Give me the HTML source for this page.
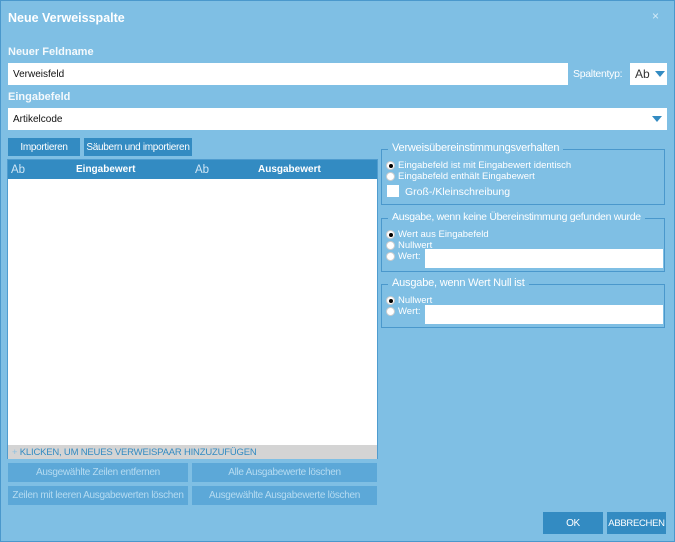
<!DOCTYPE html>
<html><head><style>
*{margin:0;padding:0;box-sizing:border-box}
body{width:675px;height:542px;background:#7fbfe4;font-family:"Liberation Sans",sans-serif;color:#fff;position:relative;overflow:hidden}
.a{position:absolute}
.inp{position:absolute;background:#fff;color:#111;font-size:10px;padding-left:5px;display:flex;align-items:center}
.btn{position:absolute;background:#338bc2;color:#fff;font-size:10px;display:flex;align-items:center;justify-content:center;letter-spacing:-0.3px}
.dis{position:absolute;background:#5ca8d8;color:#b5dbf1;font-size:10px;display:flex;align-items:center;justify-content:center;letter-spacing:-0.3px}
.grp{position:absolute;border:1px solid #4a98cc}
.lg{position:absolute;top:-8px;left:6px;background:#7fbfe4;padding:0 4px;font-size:11px;white-space:nowrap;letter-spacing:-0.2px}
.r{position:absolute;font-size:9.5px;display:flex;align-items:center;white-space:nowrap}
.rb{width:9px;height:9px;border-radius:50%;background:#fff;margin-right:3px;border:1px solid #ccc;position:relative}
.rb.on::after{content:"";position:absolute;left:1.5px;top:1.5px;width:4px;height:4px;border-radius:50%;background:#000}
.tri{width:0;height:0;border-left:5px solid transparent;border-right:5px solid transparent;border-top:6px solid #338bc2;position:absolute}
</style></head><body>
<div class="a" style="left:0;top:0;width:675px;height:542px;border:1px solid #4a98cc"></div>
<div class="a" style="left:8px;top:11px;font-size:12.5px;font-weight:bold">Neue Verweisspalte</div>
<div class="a" style="left:652px;top:9px;font-size:12px;color:#d4ebf8">×</div>
<div class="a" style="left:8px;top:46px;font-size:11px;font-weight:bold;color:#f4f9fc">Neuer Feldname</div>
<div class="inp" style="left:8px;top:63px;width:560px;height:22px">Verweisfeld</div>
<div class="a" style="left:573px;top:68px;font-size:10.5px;letter-spacing:-0.3px">Spaltentyp:</div>
<div class="inp" style="left:630px;top:63px;width:37px;height:22px;font-size:12px;color:#333">Ab<div class="tri" style="left:25px;top:8px"></div></div>
<div class="a" style="left:8px;top:91px;font-size:11px;font-weight:bold;color:#f4f9fc">Eingabefeld</div>
<div class="inp" style="left:8px;top:108px;width:659px;height:22px">Artikelcode<div class="tri" style="right:5px;top:8px"></div></div>
<div class="btn" style="left:8px;top:138px;width:72px;height:18px">Importieren</div>
<div class="btn" style="left:84px;top:138px;width:108px;height:18px">Säubern und importieren</div>
<div class="a" style="left:7px;top:159px;width:371px;height:300px;border:1px solid #4f9ccf;background:#fff"></div>
<div class="a" style="left:8px;top:160px;width:369px;height:19px;background:#338bc2;font-size:10px">
<span class="a" style="left:3px;top:4px;font-size:11.5px;color:#cfe6f5">Ab</span>
<span class="a" style="left:68px;top:4px;font-weight:bold">Eingabewert</span>
<span class="a" style="left:187px;top:4px;font-size:11.5px;color:#cfe6f5">Ab</span>
<span class="a" style="left:250px;top:4px;font-weight:bold">Ausgabewert</span></div>
<div class="a" style="left:8px;top:445px;width:369px;height:14px;background:#d4d4d4;color:#338bc2;font-size:9.5px;padding:2px 0 0 4px;white-space:nowrap;letter-spacing:-0.2px"><span style="color:#8cc0e0">+</span> KLICKEN, UM NEUES VERWEISPAAR HINZUZUFÜGEN</div>
<div class="dis" style="left:8px;top:463px;width:180px;height:19px">Ausgewählte Zeilen entfernen</div>
<div class="dis" style="left:192px;top:463px;width:185px;height:19px">Alle Ausgabewerte löschen</div>
<div class="dis" style="left:8px;top:486px;width:180px;height:19px">Zeilen mit leeren Ausgabewerten löschen</div>
<div class="dis" style="left:192px;top:486px;width:185px;height:19px">Ausgewählte Ausgabewerte löschen</div>

<div class="grp" style="left:381px;top:149px;width:284px;height:56px"><div class="lg">Verweisübereinstimmungsverhalten</div></div>
<div class="r" style="left:386px;top:160px"><span class="rb on"></span>Eingabefeld ist mit Eingabewert identisch</div>
<div class="r" style="left:386px;top:171px"><span class="rb"></span>Eingabefeld enthält Eingabewert</div>
<div class="a" style="left:387px;top:185px;width:12px;height:12px;background:#fff"></div>
<div class="a" style="left:405px;top:186px;font-size:10.5px">Groß-/Kleinschreibung</div>

<div class="grp" style="left:381px;top:218px;width:284px;height:54px"><div class="lg" style="font-size:10.5px;letter-spacing:-0.3px">Ausgabe, wenn keine Übereinstimmung gefunden wurde</div></div>
<div class="r" style="left:386px;top:229px"><span class="rb on"></span>Wert aus Eingabefeld</div>
<div class="r" style="left:386px;top:240px"><span class="rb"></span>Nullwert</div>
<div class="r" style="left:386px;top:251px"><span class="rb"></span>Wert:</div>
<div class="a" style="left:425px;top:249px;width:238px;height:19px;background:#fff"></div>

<div class="grp" style="left:381px;top:284px;width:284px;height:44px"><div class="lg">Ausgabe, wenn Wert Null ist</div></div>
<div class="r" style="left:386px;top:295px"><span class="rb on"></span>Nullwert</div>
<div class="r" style="left:386px;top:306px"><span class="rb"></span>Wert:</div>
<div class="a" style="left:425px;top:305px;width:238px;height:19px;background:#fff"></div>

<div class="btn" style="left:543px;top:512px;width:60px;height:22px">OK</div>
<div class="btn" style="left:607px;top:512px;width:59px;height:22px;font-size:9.5px">ABBRECHEN</div>
</body></html>
